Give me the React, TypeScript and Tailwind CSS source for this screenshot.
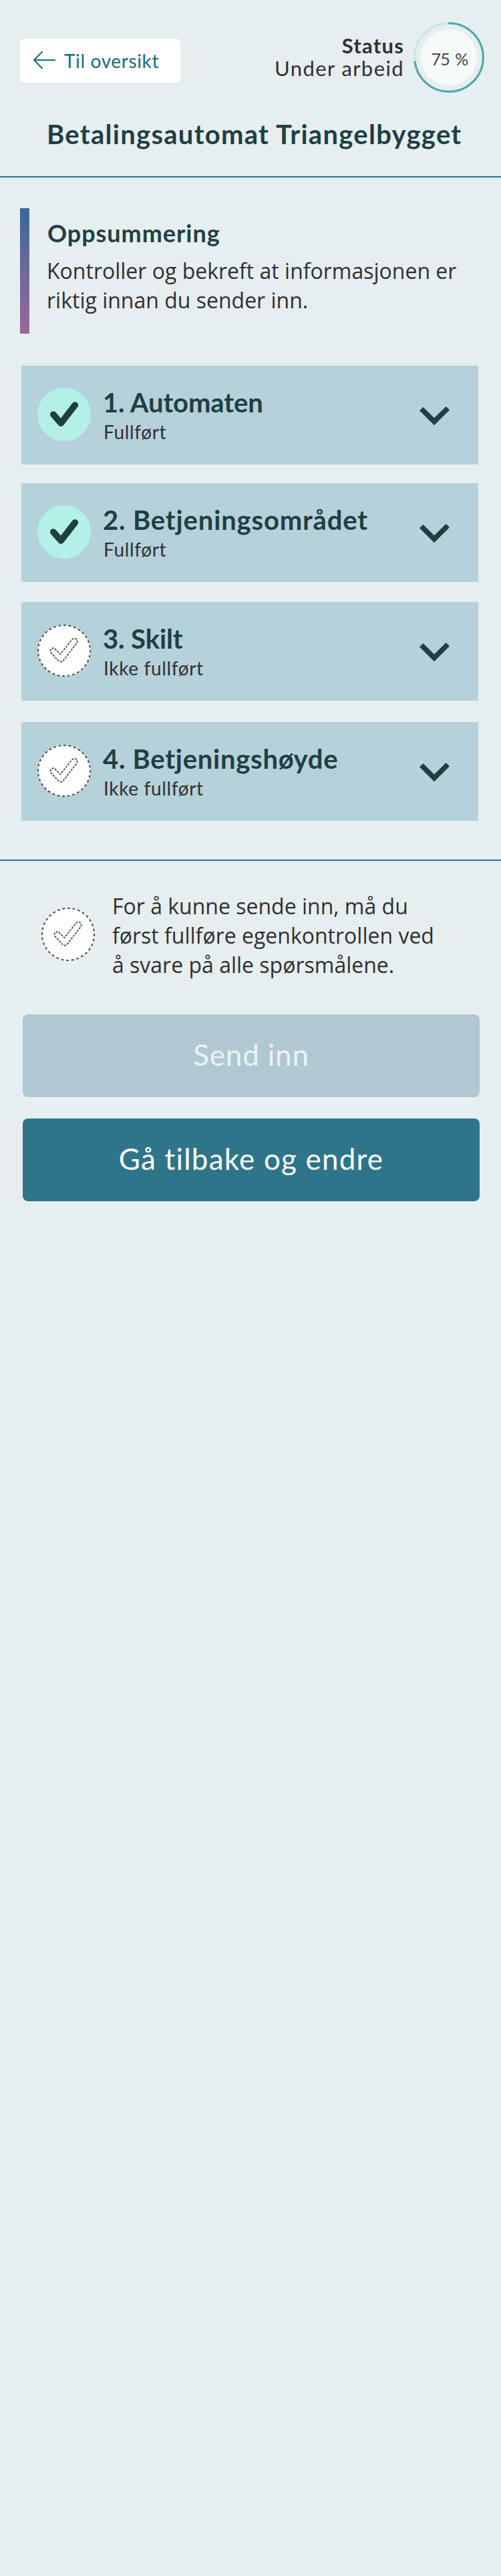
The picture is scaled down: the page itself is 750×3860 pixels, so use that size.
type Section = { title: string; done: boolean; tracking: string; gap: string };

const sections: Section[] = [
  { title: "1. Automaten", done: true, tracking: "tracking-[-0.1px]", gap: "" },
  { title: "2. Betjeningsområdet", done: true, tracking: "tracking-[0.84px]", gap: "mt-[28px]" },
  { title: "3. Skilt", done: false, tracking: "tracking-[-0.1px]", gap: "mt-[30px]" },
  { title: "4. Betjeningshøyde", done: false, tracking: "tracking-[0.72px]", gap: "mt-[32px]" },
];

function ArrowLeft() {
  return (
    <svg width="34" height="28" viewBox="0 0 34 28" fill="none" stroke="#146b82" strokeWidth="2" className="shrink-0">
      <path d="M33 14H1.5M13.5 1L1.2 14L13.5 27" />
    </svg>
  );
}

function DoneIcon() {
  return (
    <svg width="80" height="80" viewBox="0 0 80 80" className="shrink-0">
      <circle cx="40" cy="40" r="40" fill="#b3f0e8" />
      <path
        d="M23.8 40L35.2 53.2L56.3 26"
        fill="none"
        stroke="#1f3f43"
        strokeWidth="9.6"
        strokeLinecap="round"
        strokeLinejoin="round"
      />
    </svg>
  );
}

function PendingIcon({ height = 80 }: { height?: number }) {
  const shift = height === 80 ? 1 : 0;
  return (
    <svg width="80" height={height} viewBox={`0 0 80 ${height}`} className="shrink-0">
      <ellipse cx="40" cy={height / 2} rx="39.4" ry={height / 2 - 0.6} fill="#ffffff" />
      <ellipse
        cx="40"
        cy={height / 2}
        rx="39"
        ry={height / 2 - 1}
        fill="none"
        stroke="#4a4a4a"
        strokeWidth="2"
        pathLength="256"
        strokeDasharray="4 4"
        strokeDashoffset="1"
      />
      <path
        transform={`translate(0 ${shift})`}
        d="M26.1 36L34.4 44.2L51.9 22.4A4.3 4.3 0 0 1 58.9 27.6L38.6 53.9A4.6 4.6 0 0 1 31.6 54.1L19.9 41.6A4.3 4.3 0 0 1 26.1 36Z"
        fill="none"
        stroke="#4a4a4a"
        strokeWidth="1.8"
        strokeDasharray="3.2 1.7"
      />
    </svg>
  );
}

function ChevronDown() {
  return (
    <svg width="45" height="29" viewBox="0 0 45 29" className="shrink-0">
      <path d="M0 6.3L5.5 1L22 17.3L39.7 0L45 5.3L22 28.3Z" fill="#1f3f43" />
    </svg>
  );
}

function ProgressRing() {
  return (
    <div className="relative flex h-[106px] w-[106px] items-center justify-center">
      <svg width="106" height="106" viewBox="0 0 106 106" fill="none" className="absolute inset-0">
        <circle cx="53" cy="53" r="42" fill="#f6fafb" />
        <circle cx="53" cy="53" r="51.3" stroke="#cbe4e6" strokeWidth="3" />
        <circle
          cx="53"
          cy="53"r="51.3"
          stroke="#4ba8ad"
          strokeWidth="3"
          pathLength="100"
          strokeDasharray="73.5 26.5"
          transform="rotate(-91 53 53)"
        />
      </svg>
      <span className="relative pt-[4px] pl-[2px] text-[25px] leading-[32px] tracking-[-0.9px] text-[#454545] [word-spacing:3px]">
        75 %
      </span>
    </div>
  );
}

function SectionCard({ title, done, tracking, gap }: Section) {
  return (
    <button type="button" className={`flex h-[148px] w-full items-start bg-[#b5d1da] pl-[24px] text-left ${gap}`}>
      <span className={done ? "mt-[33px]" : "mt-[34px]"}>{done ? <DoneIcon /> : <PendingIcon height={78} />}</span>
      <span className="mt-[33px] ml-[18px] flex grow flex-col">
        <span className={`text-[40px] leading-[44px] font-bold text-[#1f3f43] ${tracking}`}>{title}</span>
        <span className="mt-[5px] pl-[1px] text-[28px] leading-[34px] tracking-[0.65px] text-[#303030]">
          {done ? "Fullført" : "Ikke fullført"}
        </span>
      </span>
      <span className="mt-[61px] mr-[43px]">
        <ChevronDown />
      </span>
    </button>
  );
}

export default function App() {
  return (
    <div className="flex min-h-[3860px] w-[750px] flex-col bg-[#e6eef0] font-['Lato',sans-serif]">
      <header className="flex h-[266px] flex-col border-b-2 border-[#2e7589]">
        <div className="flex h-[178px] items-start pr-[25px] pl-[30px]">
          <button
            type="button"
            className="mt-[58px] flex h-[66px] w-[240px] items-center rounded-[6px] bg-white pl-[20px] text-[28px] tracking-[0.64px] text-[#146b82]"
          >
            <span className="-mt-[2px]">
              <ArrowLeft />
            </span>
            <span className="ml-[12px] whitespace-nowrap">Til oversikt</span>
          </button>
          <div className="mt-[51px] mr-[14px] flex grow flex-col items-end text-[31px] leading-[34px] text-[#303030]">
            <span className="font-bold tracking-[1.2px]">Status</span>
            <span className="tracking-[1.4px]">Under arbeid</span>
          </div>
          <div className="mt-[33px]">
            <ProgressRing />
          </div>
        </div>
        <h1 className="pl-[70px] text-[40px] leading-[46px] font-bold tracking-[1.28px] whitespace-nowrap text-[#1f3f43]">
          Betalingsautomat Triangelbygget
        </h1>
      </header>

      <main className="flex flex-col">
        <section className="mt-[46px] ml-[30px] flex h-[188px]">
          <div className="w-[14px] shrink-0 bg-linear-to-b from-[#336899] to-[#996699]" />
          <div className="ml-[26px] pt-[17px]">
            <h2 className="pl-[1px] text-[36px] leading-[40px] font-bold tracking-[0.95px] text-[#1f3f43]">
              Oppsummering
            </h2>
            <p className="mt-[15px] w-[640px] font-['Open_Sans',sans-serif] text-[32px] leading-[44px] text-[#303030]">
              Kontroller og bekreft at informasjonen er
              <br />
              riktig innan du sender inn.
            </p>
          </div>
        </section>

        <section className="mt-[48px] ml-[32px] flex w-[684px] flex-col">
          {sections.map((s) => (
            <SectionCard key={s.title} {...s} />
          ))}
        </section>

        <section className="mt-[58px] flex flex-col border-t-2 border-[#2e7589]">
          <div className="mt-[46px] flex pl-[62px]">
            <div className="mt-[24px]">
              <PendingIcon />
            </div>
            <p className="ml-[26px] font-['Open_Sans',sans-serif] text-[32px] leading-[44px] whitespace-nowrap text-[#303030]">
              For å kunne sende inn, må du
              <br />
              først fullføre egenkontrollen ved
              <br />å svare på alle spørsmålene.
            </p>
          </div>
          <div className="mt-[52px] ml-[34px] flex w-[684px] flex-col gap-[32px] text-[44px]">
            <button
              type="button"
              disabled
              className="flex h-[124px] items-center justify-center rounded-[8px] bg-[#b0c8d2] pb-[4px] tracking-[0.8px] text-[#ebf2f5]"
            >
              Send inn
            </button>
            <button
              type="button"
              className="flex h-[124px] items-center justify-center rounded-[8px] bg-[#2e7589] pb-[4px] tracking-[1.2px] text-white"
            >
              Gå tilbake og endre
            </button>
          </div>
        </section>
      </main>
    </div>
  );
}
